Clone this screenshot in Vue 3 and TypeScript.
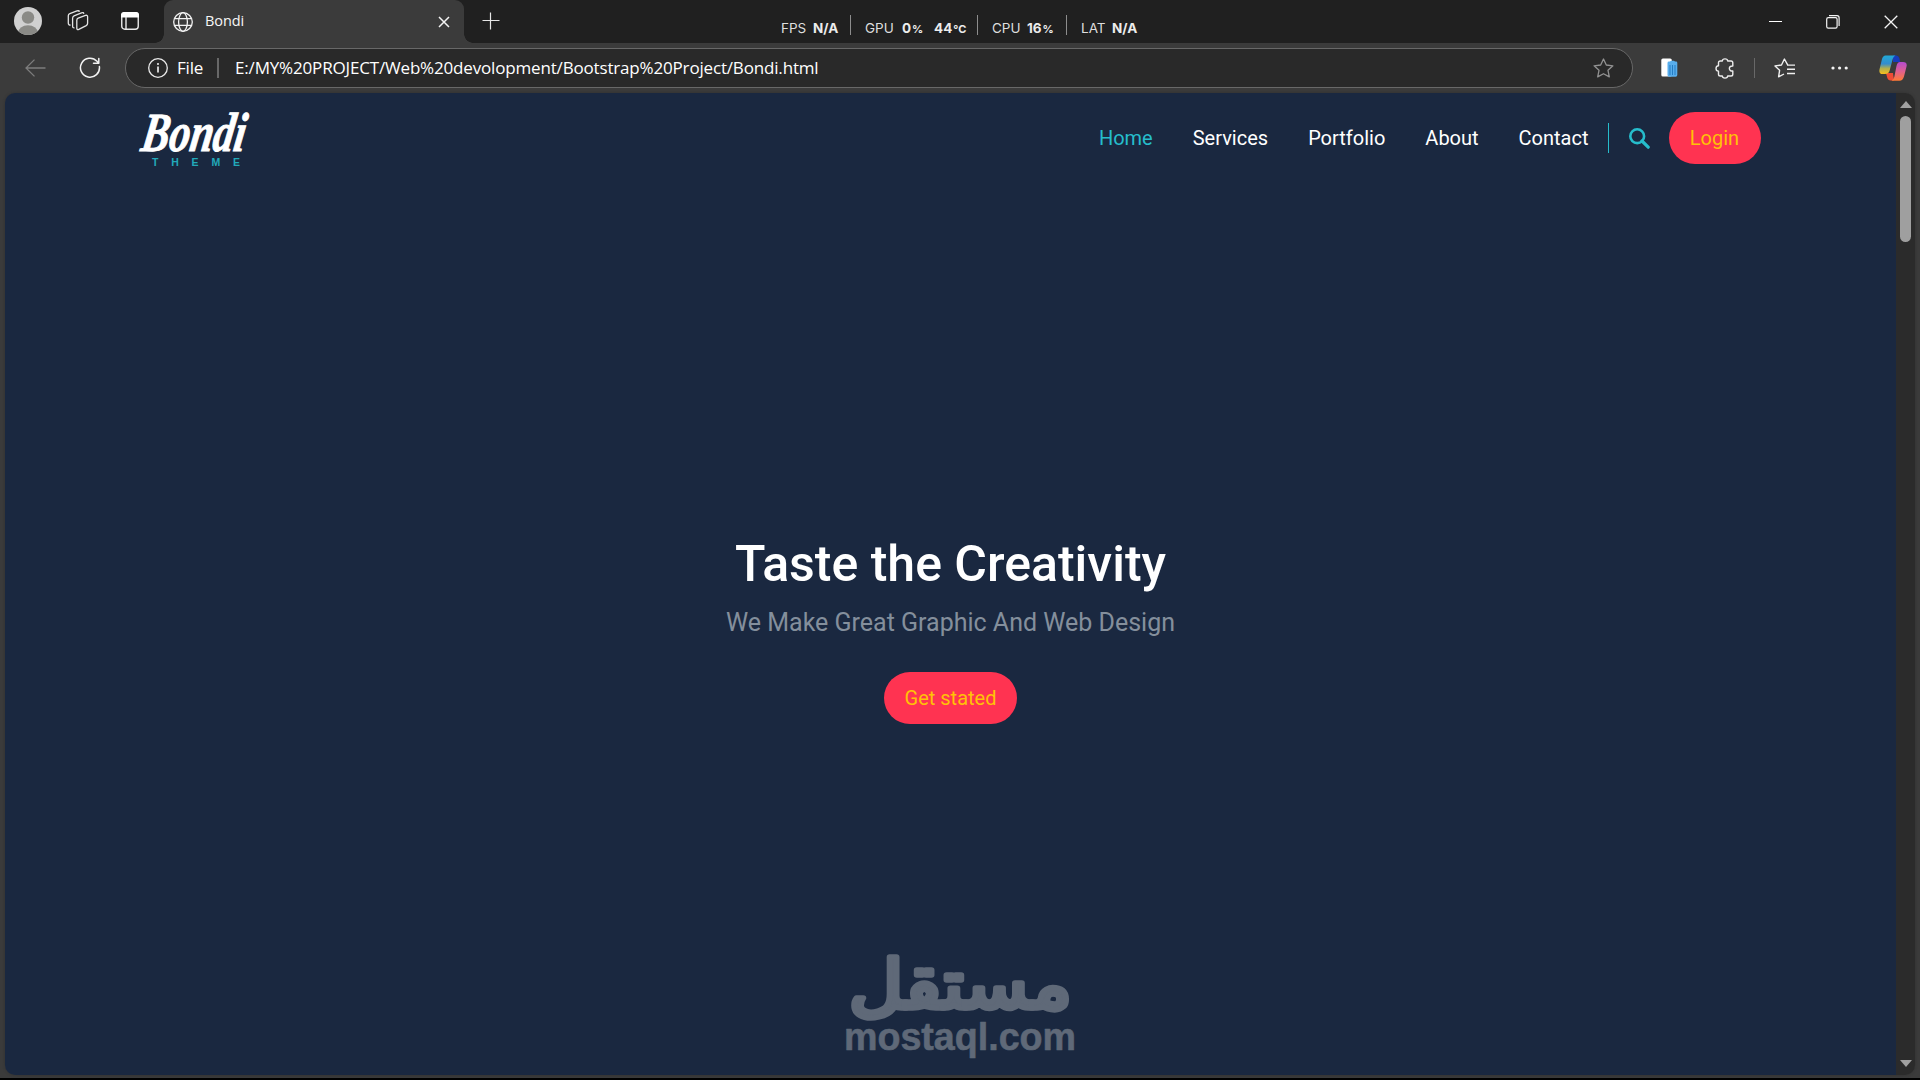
<script setup lang="ts">
interface Reading {
  label: string
  labelWidth: number
  width: number
  values: { text: string; unit: string; width: number }[]
}

const readings: Reading[] = [
  { label: 'FPS', labelWidth: 32, width: 85, values: [{ text: 'N/A', unit: '', width: 26 }] },
  { label: 'GPU', labelWidth: 37, width: 127, values: [{ text: '0', unit: '%', width: 32 }, { text: '44', unit: '°C', width: 34 }] },
  { label: 'CPU', labelWidth: 35, width: 89, values: [{ text: '16', unit: '%', width: 30 }] },
  { label: 'LAT', labelWidth: 31, width: 73, values: [{ text: 'N/A', unit: '', width: 26 }] },
]

const links: string[] = ['Home', 'Services', 'Portfolio', 'About', 'Contact']
const active = 'Home'
</script>

<template>
  <div class="window">
    <header class="strip">
      <div class="strip-tools">
        <svg class="avatar" width="28" height="28" viewBox="0 0 28 28">
          <defs><clipPath id="face"><circle cx="14" cy="14" r="14" /></clipPath></defs>
          <g clip-path="url(#face)">
            <rect width="28" height="28" fill="#d0d0d0" />
            <circle cx="14" cy="10.5" r="6.2" fill="#8a8a86" />
            <ellipse cx="14" cy="26" rx="10" ry="7.7" fill="#8a8a86" />
          </g>
        </svg>
        <svg class="spaces" width="22" height="22" viewBox="0 0 22 22" fill="none" stroke="#e4e4e4" stroke-width="1.3" stroke-linejoin="round">
          <path d="M11.2 8.2 18.5 5.4Q20.6 4.8 20.6 6.8V13.3Q20.6 14.8 19.2 15.6L11.8 19.4Q9.8 20.2 9.8 18.1V10.3Q9.8 8.8 11.2 8.2Z" />
          <path d="M7.5 17.8Q5.6 18 5.6 16.2V8.2Q5.6 6.4 7 5.8L14.5 2.8Q16.6 2.1 16.8 3.8M3.6 15.1Q1.3 15.1 1.3 13.2V5.8Q1.3 4.2 2.8 3.6L10 .9Q12 .4 12.6 1.6" />
        </svg>
        <svg class="vertical" width="18" height="18" viewBox="0 0 18 18">
          <rect x=".75" y=".75" width="16.5" height="16.5" rx="3" fill="none" stroke="#e8e8e8" stroke-width="1.4" />
          <path d="M0 5.4V3Q0 0 3 0H15Q18 0 18 3V5.4Z" fill="#fff" />
          <path d="M5 5V17.5" stroke="#e8e8e8" stroke-width="1.4" />
        </svg>
      </div>
      <div class="tab">
        <svg width="20" height="20" viewBox="0 0 20 20" fill="none" stroke="#f2f2f2" stroke-width="1.3">
          <circle cx="10" cy="10" r="9.3" />
          <ellipse cx="10" cy="10" rx="4.4" ry="9.3" />
          <path d="M1.4 6.6H18.6M1.4 13.4H18.6" />
        </svg>
        <span class="tab-title">Bondi</span>
        <svg class="tab-close" width="12" height="12" viewBox="0 0 12 12"><path d="M1 1 11 11M11 1 1 11" stroke="#f4f4f4" stroke-width="1.5" /></svg>
      </div>
      <svg class="plus" width="18" height="18" viewBox="0 0 18 18"><path d="M8.5 .5V17.5M.5 8.5H17.5" stroke="#e6e6e6" stroke-width="1.2" /></svg>
      <div class="controls">
        <svg width="13" height="14" viewBox="0 0 13 14"><path d="M0 6.5H13" stroke="#fff" /></svg>
        <svg width="14" height="14" viewBox="0 0 14 14" fill="none" stroke="#f4f4f4" stroke-width="1.2"><rect x=".7" y="2.7" width="10.4" height="10.4" rx="1.6" /><path d="M3 .7H11Q13.1 .7 13.1 2.8V11" /></svg>
        <svg width="14" height="14" viewBox="0 0 14 14"><path d="M.7 .7 13.3 13.3M13.3 .7 .7 13.3" stroke="#f4f4f4" stroke-width="1.3" /></svg>
      </div>
      <div class="monitor">
        <div v-for="r in readings" :key="r.label" class="reading" :style="{ width: r.width + 'px' }">
          <span :style="{ width: r.labelWidth + 'px' }">{{ r.label }}</span>
          <b v-for="v in r.values" :key="v.text" :style="{ width: v.width + 'px' }">{{ v.text }}<small v-if="v.unit">{{ v.unit }}</small></b>
        </div>
      </div>
    </header>

    <div class="toolbar">
      <svg class="back" width="21" height="18" viewBox="0 0 21 18" fill="none" stroke="#7d7d7d" stroke-width="1.3"><path d="M20.5 9H1M9.5 .6 1 9 9.5 17.4" /></svg>
      <svg class="reload" width="22" height="22" viewBox="0 0 22 22" fill="none" stroke="#f2f2f2" stroke-width="1.5" stroke-linecap="round" stroke-linejoin="round"><path d="M20.4 9.5A9.5 9.5 0 1 1 18 4.3L19.5 6M19.8 1.5V6.3H14.5" /></svg>
      <div class="address">
        <svg width="20" height="20" viewBox="0 0 20 20" fill="none" stroke="#eaeaea"><circle cx="10" cy="10" r="9.3" stroke-width="1.3" /><path d="M10 8.6V14.6" stroke-width="1.7" /><circle cx="10" cy="6" r="1.05" fill="#eaeaea" stroke="none" /></svg>
        <span class="scheme">File</span>
        <i class="rule"></i>
        <span class="url">E:/MY%20PROJECT/Web%20devolopment/Bootstrap%20Project/Bondi.html</span>
        <svg class="star" width="21" height="20" viewBox="0 0 21 20" fill="none" stroke="#929292" stroke-width="1.3" stroke-linejoin="round"><path d="M10.5 1 13.3 7 19.9 7.8 15 12.3 16.3 18.9 10.5 15.7 4.7 18.9 6 12.3 1.1 7.8 7.7 7Z" /></svg>
      </div>
      <div class="actions">
        <svg class="ext" width="17" height="20" viewBox="0 0 17 20"><rect x=".3" y=".5" width="10.5" height="18" rx="1.6" fill="#fff" /><path d="M6.5 5Q6.5 3.6 8 3.6H9L10 2.7H13L14 3.6H15Q16.3 3.6 16.3 5V17Q16.3 18.7 14.7 18.7H8.2Q6.5 18.7 6.5 17Z" fill="#58aeed" /><path d="M9 7V17M11.5 7V17M14 7V17" stroke="#247dc4" /></svg>
        <svg class="puzzle" width="20" height="21" viewBox="0 0 20 21" fill="none" stroke="#ececec" stroke-width="1.4" stroke-linejoin="round"><path d="M5.3 3H7.3C7.5 .2 12.5 .2 12.7 3H16Q17.8 3 17.8 4.8V8C13.2 7.5 13.2 13.5 17.8 13V16.2Q17.8 18 16 18H12.7C12.5 20.8 7.5 20.8 7.3 18H5.3Q3.5 18 3.5 16.2V13.2C.2 13 .2 8 3.5 7.8V4.8Q3.5 3 5.3 3Z" /></svg>
        <i class="dots"></i>
        <svg class="faves" width="22" height="20" viewBox="0 0 22 20" fill="none" stroke="#f0f0f0" stroke-width="1.4" stroke-linejoin="round"><path d="M13.8 7.2 10.4 1 7.5 7 1 7.9 5.6 12.3 4.6 18.8 10 16M13 7.1H21M13 11.3H21M13 15.5H21" /></svg>
        <svg class="more" width="17" height="4" viewBox="0 0 17 4" fill="#f4f4f4"><circle cx="2" cy="2" r="1.6" /><circle cx="8.6" cy="2" r="1.6" /><circle cx="15.2" cy="2" r="1.6" /></svg>
        <svg class="copilot" width="28" height="27" viewBox="0 0 28 27">
          <defs>
            <linearGradient id="cool" x1="0" y1="0" x2="0" y2="1"><stop offset="0" stop-color="#20a9d6" /><stop offset=".45" stop-color="#348cce" /><stop offset=".7" stop-color="#b2b04e" /><stop offset="1" stop-color="#f7bd1c" /></linearGradient>
            <linearGradient id="warm" x1="0" y1="0" x2="0" y2="1"><stop offset="0" stop-color="#b44bce" /><stop offset=".5" stop-color="#df6090" /><stop offset="1" stop-color="#ff7a35" /></linearGradient>
          </defs>
          <path d="M14 .5H17.5Q19.5 .5 20.3 3L21.2 7H14Z" fill="#173cbb" />
          <path d="M7 18H14L15 25.5H11.5Q9 25.5 8.2 22.5Z" fill="#ee4c35" />
          <path d="M6.5 .5H16.5Q14.5 1 13.7 4L10.5 16Q9.5 19 6 19H3.5Q-.5 19 .6 14L3 4Q4 .5 6.5 .5Z" fill="url(#cool)" />
          <path d="M21 7H24Q28.8 7 27.4 12L25 21.5Q23.8 25.7 20.5 25.7H12.5Q14.5 25 15.3 22L17.5 11Q18.4 7 21 7Z" fill="url(#warm)" />
        </svg>
      </div>
    </div>

    <div class="viewport">
      <main class="page">
        <nav class="navbar">
          <svg class="logo" width="112" height="72" viewBox="0 -12 112 72" role="img">
            <text x="0" y="33" class="logo-name" textLength="107" lengthAdjust="spacingAndGlyphs" transform="translate(5 2) skewX(-9) scale(.97 1.2)">Bondi</text>
            <text x="11" y="56.5" class="logo-sub" textLength="88">THEME</text>
          </svg>
          <ul class="links">
            <li v-for="link in links" :key="link"><a :class="{ active: link === active }">{{ link }}</a></li>
          </ul>
          <i class="divider"></i>
          <svg class="search" width="21" height="21" viewBox="0 0 21 21" fill="none" stroke="#26bdcc"><circle cx="8.2" cy="8.2" r="6.9" stroke-width="2.6" /><path d="M13 13 19.2 19.2" stroke-width="3.2" stroke-linecap="round" /></svg>
          <button class="btn login">Login</button>
        </nav>
        <section class="hero">
          <h1>Taste the Creativity</h1>
          <p>We Make Great Graphic And Web Design</p>
          <button class="btn start">Get stated</button>
        </section>
      </main>
      <aside class="scroll">
        <i class="up"></i>
        <i class="thumb"></i>
        <i class="down"></i>
      </aside>
    </div>

    <svg class="watermark" width="240" height="150" viewBox="0 -30 240 150">
      <text x="9" y="62" class="wm-ar" direction="rtl" text-anchor="end" textLength="223" lengthAdjust="spacingAndGlyphs">مستقل</text>
      <text x="4" y="104" class="wm-en" textLength="232" lengthAdjust="spacingAndGlyphs">mostaql.com</text>
    </svg>
  </div>
</template>

<style>
body { background: #000; overflow: hidden; }
</style>

<style scoped>
.window { position: relative; display: flex; flex-direction: column; box-sizing: border-box; width: 1920px; height: 1080px; border-bottom: 2px solid #000; background: #3b3b3b; font-family: "Open Sans", "Noto Sans", sans-serif; overflow: hidden; }
svg { display: block; flex: none; }
.strip { display: flex; height: 43px; flex: none; background: #202020; }
.strip-tools { display: flex; align-items: center; width: 164px; height: 42px; }
.avatar { margin-left: 14px; }
.spaces { margin-left: 25px; }
.vertical { margin-left: 32px; }
.tab { position: relative; display: flex; align-items: center; box-sizing: border-box; width: 300px; height: 43px; padding: 0 12px 0 9px; border-radius: 9px 9px 0 0; background: #3b3b3b; }
.tab::before, .tab::after { content: ""; position: absolute; bottom: 0; width: 9px; height: 9px; }
.tab::before { left: -9px; background: radial-gradient(circle at 0 0, transparent 8.5px, #3b3b3b 9px); }
.tab::after { right: -9px; background: radial-gradient(circle at 100% 0, transparent 8.5px, #3b3b3b 9px); }
.tab-title { margin: -2px auto 0 12px; color: #f6f6f6; font-size: 14.5px; letter-spacing: -.1px; }
.tab-close { margin-right: 2px; }
.plus { margin: 12px 0 0 18px; }
.controls { display: flex; align-items: center; gap: 44px; margin: 0 22px 0 auto; height: 43px; }
.monitor { position: absolute; left: 766px; top: 15px; display: flex; height: 20px; color: #dedede; font: 13.5px/26px Inter, sans-serif; }
.reading { display: flex; box-sizing: border-box; padding-left: 15px; border-right: 1px solid #8d8d8d; white-space: nowrap; }
.reading:not(:first-child) { padding-left: 14px; }
.reading:last-child { border: 0; }
.reading b { font-weight: 700; color: #ececec; }
.reading small { margin-left: 1px; font-size: 11px; }
.toolbar { display: flex; align-items: center; height: 50px; flex: none; }
.back { margin-left: 25px; }
.reload { margin-left: 33px; }
.address { display: flex; align-items: center; box-sizing: border-box; width: 1508px; height: 40px; margin-left: 24px; padding: 0 18px 0 22px; border: 1px solid #686868; border-radius: 20px; background: #292929; color: #fff; font-size: 17px; line-height: 24px; white-space: nowrap; }
.scheme { width: 40px; margin: -1px 0 0 9px; letter-spacing: -.2px; }
.rule { width: 2px; height: 20px; background: #686868; }
.url { margin: -1px 0 0 16px; letter-spacing: -.17px; }
.star { margin-left: auto; }
.actions { display: flex; align-items: center; }
.ext { margin-left: 28px; }
.puzzle { margin-left: 37px; }
.dots { width: 1px; height: 20px; margin-left: 19px; background: #686868; }
.faves { margin-left: 19px; }
.more { margin-left: 35px; }
.copilot { margin-left: 31px; }
.viewport { display: flex; width: 1910px; height: 982px; margin-left: 5px; border-radius: 10px; overflow: hidden; box-shadow: 0 0 3px #2226; }
.page { width: 1891px; background: #1a2840; font-family: Roboto, sans-serif; }
.navbar { display: flex; align-items: center; width: 1620px; height: 90px; margin: 0 auto; }
.logo { margin-top: -11px; overflow: visible; }
.logo-name { fill: #fff; stroke: #fff; stroke-width: .8; font: italic 700 46px "Liberation Serif", serif; }
.logo-sub { fill: #22a9ba; font: 700 10.5px "Liberation Sans", sans-serif; }
.links { display: flex; gap: 40px; margin: 0 19px 0 auto; padding: 0; list-style: none; color: #fff; font-size: 20px; line-height: 30px; }
.active { color: #26bdcc; }
.divider { width: 1px; height: 30px; background: #26bdcc; }
.search { margin: 0 19px 0 20px; }
.btn { height: 52px; padding: 0; border: 0; border-radius: 26px; background: #ff3351; color: #ffc107; font: 20px/30px Roboto, sans-serif; }
.login { width: 92px; }
.hero { display: flex; flex-direction: column; align-items: center; padding-top: 351px; }
.hero h1 { margin: 0; color: #fff; font-size: 50px; line-height: 60px; font-weight: 500; }
.hero p { margin: 11px 0 0; color: #848f9c; font-size: 25px; line-height: 36px; }
.start { width: 133px; margin-top: 31px; }
.scroll { display: flex; flex-direction: column; align-items: center; width: 19px; background: #2b2b2b; }
.up, .down { border: solid transparent; border-width: 0 6.5px; }
.up { margin-top: 8px; border-bottom: 7px solid #a0a0a0; }
.thumb { width: 11px; height: 126px; margin-top: 8px; border-radius: 6px; background: #9f9f9f; }
.down { margin: auto 0 8px; border-top: 7px solid #a0a0a0; }
.watermark { position: absolute; left: 840px; top: 916px; overflow: visible; }
.wm-ar { fill: #5f6978; stroke: #5f6978; stroke-width: 5.5; stroke-linejoin: round; font: 400 67px "DejaVu Sans", sans-serif; }
.wm-en { fill: #5f6978; stroke: #5f6978; stroke-width: .6; stroke-linejoin: round; font: 700 38px "Liberation Sans", sans-serif; }
</style>
